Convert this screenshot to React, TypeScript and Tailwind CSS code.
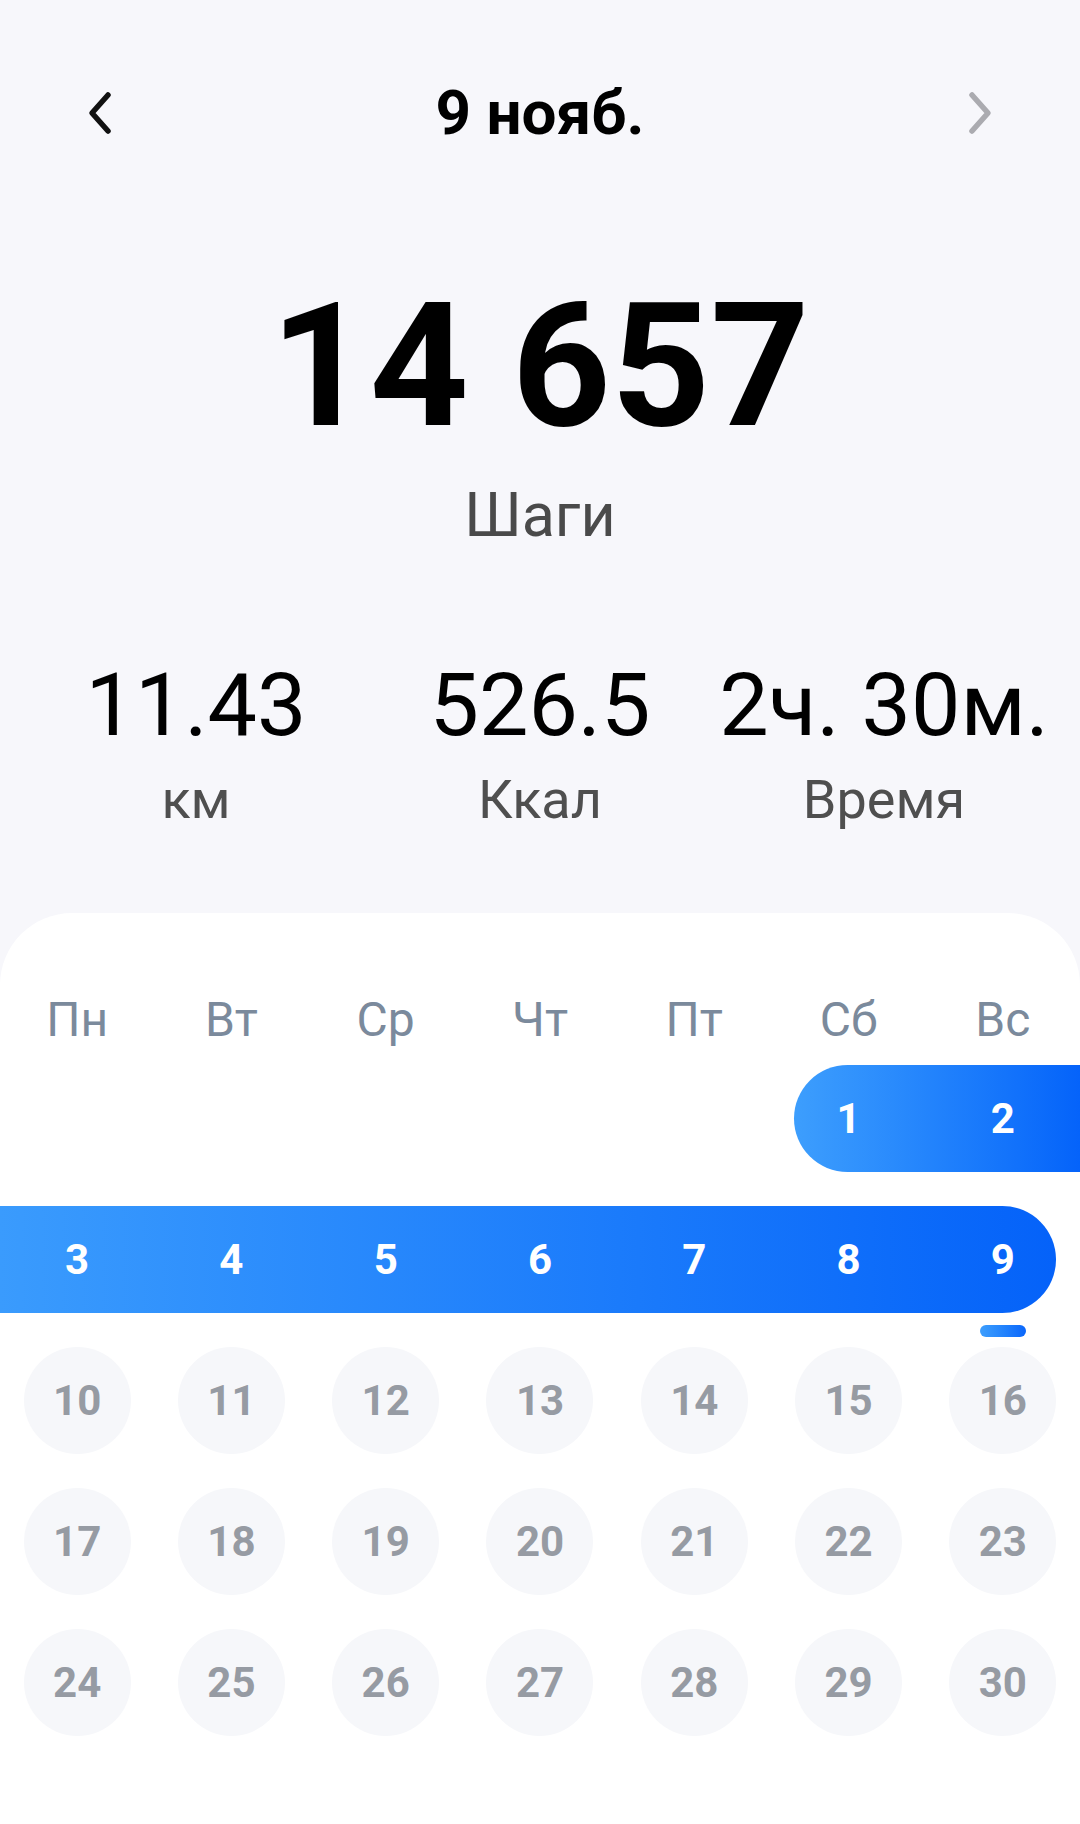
import React from "react";

const colStart = [
  "col-start-1",
  "col-start-2",
  "col-start-3",
  "col-start-4",
  "col-start-5",
  "col-start-6",
  "col-start-7",
];

const weekDays = ["Пн", "Вт", "Ср", "Чт", "Пт", "Сб", "Вс"];

const font = { fontFamily: "Roboto, 'Noto Sans', sans-serif" };

function Chevron({ dir, color }: { dir: "left" | "right"; color: string }) {
  const d = dir === "left" ? "M22 4 L6 22 L22 40" : "M10 4 L26 22 L10 40";
  return (
    <svg width="32" height="44" viewBox="0 0 32 44" fill="none">
      <path d={d} stroke={color} strokeWidth="5.5" strokeLinecap="round" strokeLinejoin="round" />
    </svg>
  );
}

function Stat({ value, label }: { value: string; label: string }) {
  return (
    <div className="flex flex-col items-center">
      <span className="text-[88px] leading-none text-black whitespace-nowrap">{value}</span>
      <span className="mt-[24px] text-[54px] leading-none text-[#4f4f4f]">{label}</span>
    </div>
  );
}

function Day({ n, col, selected }: { n: number; col: number; selected?: boolean }) {
  if (selected) {
    return (
      <div className={`${colStart[col]} row-start-1 relative flex items-center justify-center text-[42px] font-bold text-white leading-none`}>
        {n}
        {n === 9 && (
          <div className="absolute left-1/2 top-[119px] -translate-x-1/2 w-[46px] h-[12px] rounded-full bg-linear-to-r from-[#3d9efd] to-[#0a66fb]" />
        )}
      </div>
    );
  }
  return (
    <div className={`${colStart[col]} row-start-1 flex items-center justify-center`}>
      <div className="w-[107px] h-[107px] rounded-full bg-[#f6f7fa] flex items-center justify-center text-[42px] font-bold text-[#969ba3] leading-none">
        {n}
      </div>
    </div>
  );
}

export default function App() {
  const rows = [
    [10, 11, 12, 13, 14, 15, 16],
    [17, 18, 19, 20, 21, 22, 23],
    [24, 25, 26, 27, 28, 29, 30],
  ];

  return (
    <div className="min-h-[1824px] w-[1080px] bg-[#f7f7fb] flex flex-col" style={font}>
      <div className="mt-[82px] h-[62px] flex items-center justify-between pl-[86px] pr-[86px]">
        <Chevron dir="left" color="#111111" />
        <span className="text-[62px] font-bold leading-none text-black">9 нояб.</span>
        <Chevron dir="right" color="#ababb0" />
      </div>

      <div className="mt-[136px] text-center text-[173px] font-bold leading-none text-black">14 657</div>
      <div className="mt-[32px] text-center text-[61px] leading-none text-[#4a4a4a]">Шаги</div>

      <div className="mt-[115px] grid grid-cols-3 px-[24px]">
        <Stat value="11.43" label="км" />
        <Stat value="526.5" label="Ккал" />
        <Stat value="2ч. 30м." label="Время" />
      </div>

      <div className="mt-[86px] flex-1 bg-white rounded-t-[72px] pt-[83px] pb-[60px]">
        <div className="grid grid-cols-7">
          {weekDays.map((w) => (
            <div key={w} className="text-center text-[48px] leading-none text-[#7b8a9c]">
              {w}
            </div>
          ))}
        </div>

        <div className="mt-[21px] flex flex-col gap-y-[34px]">
          <div className="grid grid-cols-7 h-[107px]">
            <div className="col-start-6 col-span-2 row-start-1 ml-[23px] rounded-l-full rounded-r-[12px] bg-linear-to-r from-[#3d9efd] to-[#0563fa]" />
            <Day n={1} col={5} selected />
            <Day n={2} col={6} selected />
          </div>

          <div className="grid grid-cols-7 h-[107px]">
            <div className="col-start-1 col-span-7 row-start-1 mr-[24px] rounded-r-full rounded-l-[13px] bg-linear-to-r from-[#3a9bfd] to-[#0562f9]" />
            {[3, 4, 5, 6, 7, 8, 9].map((n, i) => (
              <Day key={n} n={n} col={i} selected />
            ))}
          </div>

          {rows.map((r, ri) => (
            <div key={ri} className="grid grid-cols-7 h-[107px]">
              {r.map((n, i) => (
                <Day key={n} n={n} col={i} />
              ))}
            </div>
          ))}
        </div>
      </div>
    </div>
  );
}
